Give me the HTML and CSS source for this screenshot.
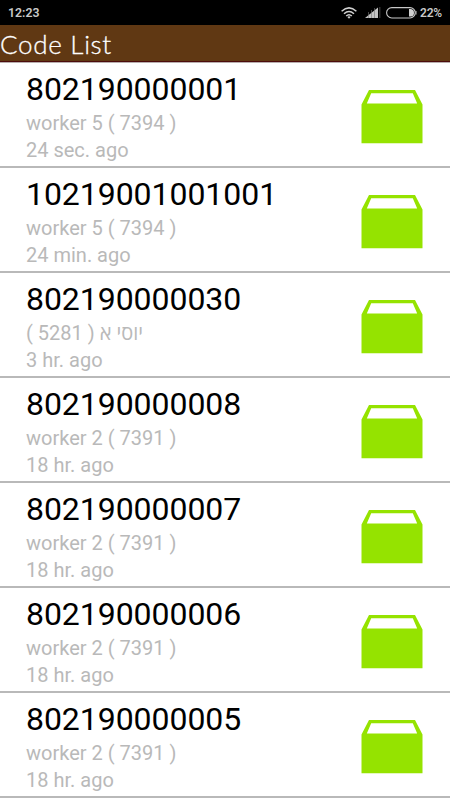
FILE: index.html
```
<!DOCTYPE html>
<html lang="en">
<head>
  <meta charset="UTF-8" />
  <meta name="viewport" content="width=device-width, initial-scale=1.0"/>
  <title>Code List</title>
  <link rel="stylesheet" href="styles.css">
</head>
<body>
  <div class="status-bar">
    <span class="clock">12:23</span>
    <div class="status-icons">
      <svg class="wifi" width="16" height="12" viewBox="0 0 16 12" fill="none" stroke="#d0d0d0" stroke-width="1.5">
        <path d="M0.6 4.2 Q8 -2.4 15.4 4.2"/>
        <path d="M3 6.7 Q8 2.2 13 6.7"/>
        <path d="M5.2 9 Q8 6.4 10.8 9"/>
        <path d="M6.4 10 L8 11.8 L9.6 10 Q8 8.6 6.4 10Z" fill="#d0d0d0" stroke="none"/>
      </svg>
      <svg class="signal" width="16" height="11" viewBox="0 0 16 11">
        <path d="M0 11 L13 0.5 V11Z" fill="#c4c4c4"/>
        <path d="M14 0 H15.5 V11 H14Z" fill="#303030"/>
        <path d="M3.5 5V11 M6.5 3V11 M9.5 1V11" stroke="#777" stroke-width="0.6"/>
      </svg>
      <svg class="battery" width="31" height="12" viewBox="0 0 31 12">
        <rect x="0.6" y="0.6" width="28.6" height="10.4" rx="5.2" fill="none" stroke="#c8c8c8" stroke-width="1.1"/>
        <path d="M23 2 H25 Q28 2.4 28 5.8 Q28 9.2 25 9.6 H23Z" fill="#d0d0d0"/>
        <path d="M29.5 4 H30.5 V7.6 H29.5Z" fill="#c8c8c8"/>
      </svg>
      <span class="percent">22%</span>
    </div>
  </div>
  <header>
    <h1>Code List</h1>
  </header>
  <main id="list"></main>

  <script>
    const codes = [
      {code: "802190000001", worker: "worker 5 ( 7394 )", time: "24 sec. ago"},
      {code: "10219001001001", worker: "worker 5 ( 7394 )", time: "24 min. ago"},
      {code: "802190000030", worker: "יוסי א ( 5281 )", time: "3 hr. ago", rtl: true},
      {code: "802190000008", worker: "worker 2 ( 7391 )", time: "18 hr. ago"},
      {code: "802190000007", worker: "worker 2 ( 7391 )", time: "18 hr. ago"},
      {code: "802190000006", worker: "worker 2 ( 7391 )", time: "18 hr. ago"},
      {code: "802190000005", worker: "worker 2 ( 7391 )", time: "18 hr. ago"}
    ];
    const box = `<svg class="box" width="62" height="55" viewBox="0 0 62 55">
      <path fill="#95e300" fill-rule="evenodd" d="M8 1 H54 L61.5 15.5 V54.3 H0.5 V15.5Z M10.2 4.3 L5.8 14.5 H56.2 L51.8 4.3Z"/>
    </svg>`;
    document.getElementById("list").innerHTML = codes.map(c => `
      <div class="row">
        <div class="info">
          <div class="code">${c.code}</div>
          <div class="sub" dir="${c.rtl ? "rtl" : "ltr"}">${c.worker}</div>
          <div class="sub">${c.time}</div>
        </div>
        ${box}
      </div>`).join("");
  </script>
</body>
</html>
```
FILE: styles.css
```
* {margin: 0; padding: 0; box-sizing: border-box;}
body {
  background: #fff;
  font-family: Roboto, 'Open Sans', 'Noto Sans', sans-serif;
  height: 800px;
  overflow: hidden;
}
.status-bar {
  background-color: #000;
  height: 25px;
  padding: 0 8px;
  display: flex;
  align-items: center;
  justify-content: space-between;
  color: #c8c8c8;
  font-size: 12.3px;
  font-weight: 600;
}
.status-icons {
  display: flex;
  align-items: center;
}
.wifi {
  margin-right: 8px;
}
.signal {
  margin-right: 5px;
}
.battery {
  margin-right: 3px;
}
.percent {
  font-size: 12px;
  letter-spacing: -0.2px;
}
header {
  background-color: #603813;
  height: 38px;
  border-bottom: 1px solid #b9afaf;
  box-shadow: inset 0 -1px 0 #4d0c0c;
}
h1 {
  color: #fff;
  font-family: Lato, sans-serif;
  font-size: 26px;
  font-weight: 300;
  line-height: 38px;
  letter-spacing: 0.7px;
  -webkit-text-stroke: 0.3px #fff;
}
.row {
  height: 105px;
  padding: 7px 27px 0 26px;
  border-bottom: 2px solid #b9b9b9;
  display: flex;
  justify-content: space-between;
}
.code {
  color: #000;
  font-size: 32px;
  line-height: 38px;
  letter-spacing: -0.05px;
  margin-bottom: 2px;
}
.sub {
  color: #b9b9b9;
  font-size: 20px;
  line-height: 27px;
  text-align: left;
}
.box {
  margin-top: 19px;
}
```
